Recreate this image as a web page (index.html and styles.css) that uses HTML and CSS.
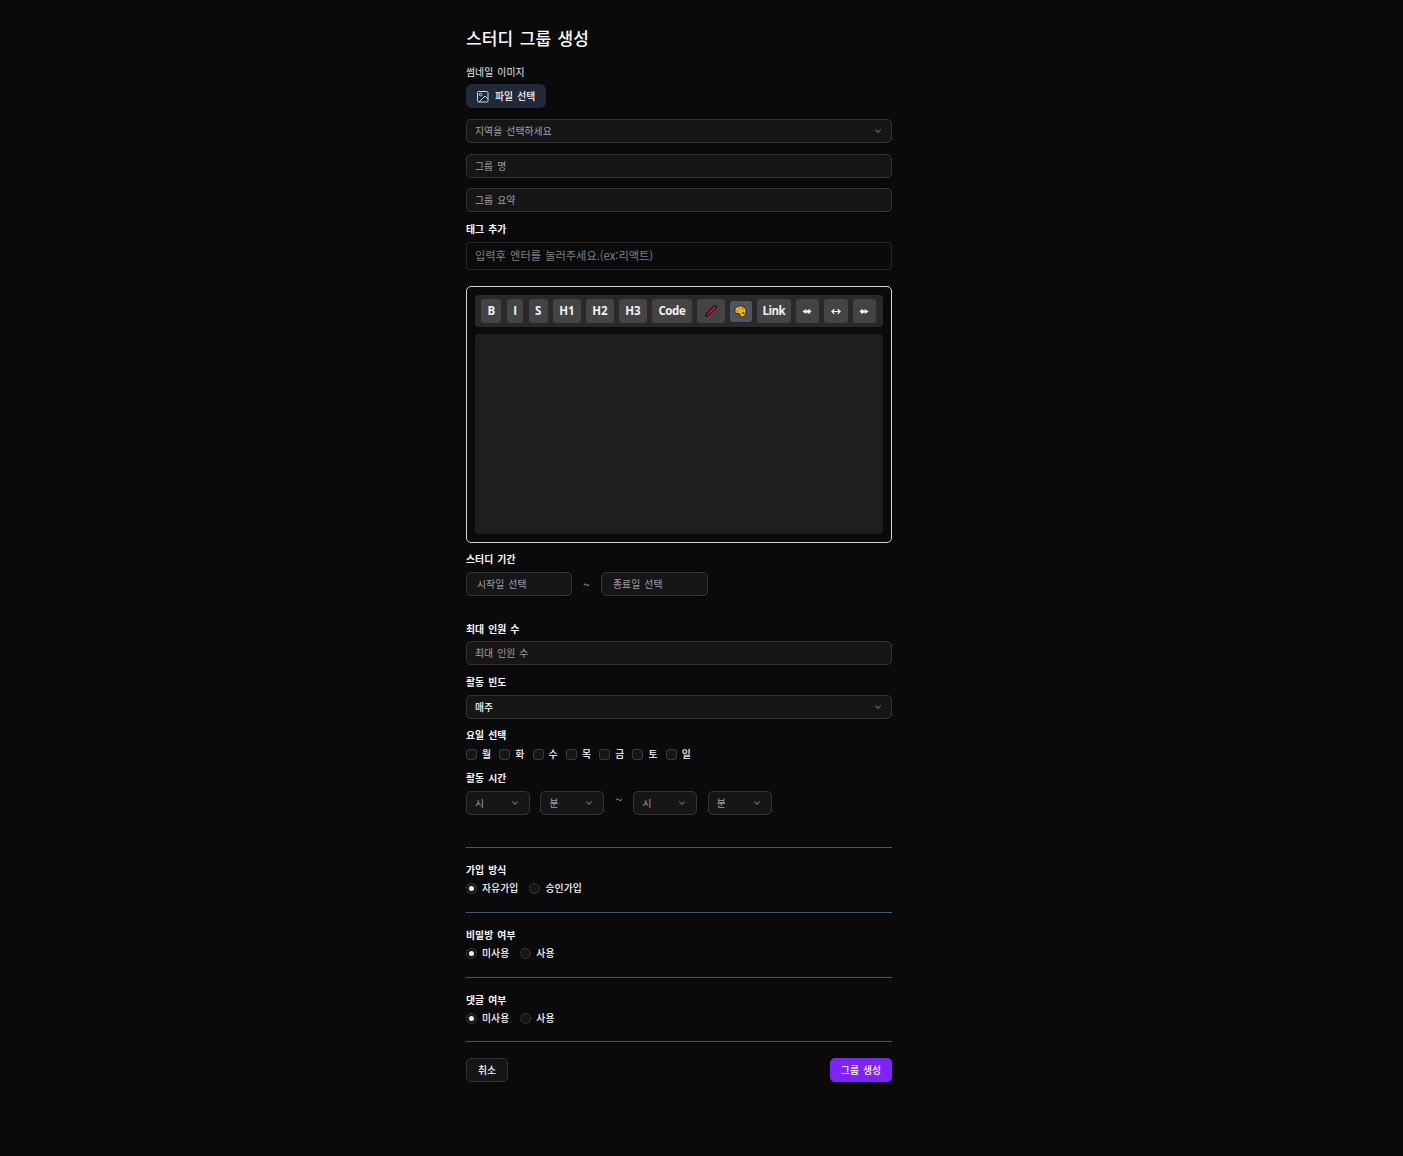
FILE: index.html
```html
<!DOCTYPE html>
<html lang="ko">
<head>
<meta charset="utf-8">
<title>스터디 그룹 생성</title>
<link rel="stylesheet" href="styles.css">
</head>
<body>
<svg class="defs" width="0" height="0" aria-hidden="true">
  <symbol id="chevron" viewBox="0 0 24 24"><path d="m6 9 6 6 6-6" fill="none" stroke="currentColor" stroke-width="2.6" stroke-linecap="round" stroke-linejoin="round"/></symbol>
</svg>
<main class="form">
  <h1 class="title">스터디 그룹 생성</h1>

  <div class="label thumb-label">썸네일 이미지</div>
  <button class="file-button">
    <svg width="13" height="13" viewBox="0 0 13 13" fill="none" stroke="currentColor" stroke-linejoin="round"><rect x="1.500" y="1.500" width="10.500" height="10.500" rx="1.200"/><circle cx="4.600" cy="4.600" r="1.300"/><path d="M3 12 9 6l3 3"/></svg>
    <span>파일 선택</span>
  </button>

  <div class="field select region"><span>지역을 선택하세요</span><svg class="chevron"><use href="#chevron"/></svg></div>
  <div class="field name"><span>그룹 명</span></div>
  <div class="field summary"><span>그룹 요약</span></div>

  <div class="label tag-label">태그 추가</div>
  <div class="tag-input"><span>입력후 엔터를 눌러주세요.(ex:리액트)</span></div>

  <section class="editor">
    <div class="toolbar">
      <button class="tool bold">B</button>
      <button class="tool italic">I</button>
      <button class="tool strike">S</button>
      <button class="tool heading">H1</button>
      <button class="tool heading">H2</button>
      <button class="tool heading">H3</button>
      <button class="tool code">Code</button>
      <button class="tool pen"><svg width="14" height="14" viewBox="0 0 14 14"><path d="M1.700 12.300 2.500 9.500 9.800 2.200Q11 1.200 12 2T11.800 4.200L4.500 11.500Z" fill="#e3064f" stroke="#16060b" stroke-width="1.100" stroke-linejoin="round"/></svg></button>
      <button class="tool palette"><svg width="13" height="13" viewBox="0 0 13 13"><path d="M6.500.8C3.200.8.8 2.800.8 5.500c0 2 1.500 3.200 3.200 3 1.400-.2 2.100.4 2 1.600-.1 1.400.8 2.200 2.200 1.900 2.300-.5 4-2.900 4-5.400C12.200 3.200 9.700.8 6.500.8Z" fill="#ffb900" stroke="#18130b" stroke-width=".9"/><circle cx="3.500" cy="5.700" r="1" fill="#e8590c"/><circle cx="5.300" cy="3" r="1" fill="#6a9d32"/><circle cx="8.600" cy="3.500" r="1" fill="#e03c31"/><circle cx="9.300" cy="8" r="1.300" fill="#245fd0"/></svg></button>
      <button class="tool link">Link</button>
      <button class="tool left"><svg width="10" height="8" viewBox="0 0 10 8"><path d="M.3 4.500 4.300 2v1.700L8 2v1.700h1.300v1.600H8V7L4.300 5.300V7Z" fill="currentColor"/></svg></button>
      <button class="tool both"><svg width="10" height="8" viewBox="0 0 10 8" fill="none" stroke="currentColor" stroke-width="1.200"><path d="M1 4.500h8M3.300 2.200.8 4.500l2.500 2.300M6.700 2.200 9.200 4.500 6.700 6.800"/></svg></button>
      <button class="tool right"><svg width="10" height="8" viewBox="0 0 10 8"><path d="M9.700 4.500 5.700 2v1.700L2 2v1.700H.7v1.600H2V7l3.700-1.700V7Z" fill="currentColor"/></svg></button>
    </div>
    <div class="canvas"></div>
  </section>

  <div class="label period-label">스터디 기간</div>
  <div class="dates">
    <div class="field date"><span>시작일 선택</span></div>
    <span class="tilde">~</span>
    <div class="field date end"><span>종료일 선택</span></div>
  </div>

  <div class="label max-label">최대 인원 수</div>
  <div class="field max"><span>최대 인원 수</span></div>

  <div class="label often-label">활동 빈도</div>
  <div class="field select often filled"><span>매주</span><svg class="chevron"><use href="#chevron"/></svg></div>

  <div class="label days-label">요일 선택</div>
  <div class="days">
    <label class="day"><i class="box"></i>월</label>
    <label class="day"><i class="box"></i>화</label>
    <label class="day"><i class="box"></i>수</label>
    <label class="day"><i class="box"></i>목</label>
    <label class="day"><i class="box"></i>금</label>
    <label class="day"><i class="box"></i>토</label>
    <label class="day"><i class="box"></i>일</label>
  </div>

  <div class="label time-label">활동 시간</div>
  <div class="times">
    <div class="field select time"><span>시</span><svg class="chevron"><use href="#chevron"/></svg></div>
    <div class="field select time"><span>분</span><svg class="chevron"><use href="#chevron"/></svg></div>
    <span class="tilde">~</span>
    <div class="field select time"><span>시</span><svg class="chevron"><use href="#chevron"/></svg></div>
    <div class="field select time"><span>분</span><svg class="chevron"><use href="#chevron"/></svg></div>
  </div>

  <section class="choice">
    <div class="label">가입 방식</div>
    <div class="radios">
      <label class="option"><i class="radio on"></i>자유가입</label>
      <label class="option"><i class="radio"></i>승인가입</label>
    </div>
  </section>
  <section class="choice">
    <div class="label">비밀방 여부</div>
    <div class="radios">
      <label class="option"><i class="radio on"></i>미사용</label>
      <label class="option"><i class="radio"></i>사용</label>
    </div>
  </section>
  <section class="choice last">
    <div class="label">댓글 여부</div>
    <div class="radios">
      <label class="option"><i class="radio on"></i>미사용</label>
      <label class="option"><i class="radio"></i>사용</label>
    </div>
  </section>

  <footer class="actions">
    <button class="cancel">취소</button>
    <button class="submit">그룹 생성</button>
  </footer>
</main>
</body>
</html>
```
FILE: styles.css
```css
* { box-sizing: border-box; }

body {
  margin: 0;
  min-height: 1156px;
  background: #0a0a0a;
  color: #fafafa;
  font-family: "Noto Sans CJK KR", sans-serif;
  font-size: 9.8px;
  line-height: 15px;
  letter-spacing: .1px;
  word-spacing: 1.1px;
}

button {
  border: 0;
  padding: 0;
  font: inherit;
  color: inherit;
  letter-spacing: inherit;
  word-spacing: inherit;
  white-space: nowrap;
}

.defs { display: block; }

.form {
  width: 426px;
  margin-left: 466px;
  padding-top: 24px;
}

.title {
  margin: 0;
  font-size: 17px;
  font-weight: 500;
  line-height: 28px;
  height: 30px;
  word-spacing: 1.6px;
}

.label { height: 15px; font-weight: 700; white-space: nowrap; }
.thumb-label { margin-top: 11px; height: 14px; line-height: 14px; font-weight: 400; color: #e5e5e5; }

.file-button {
  display: flex;
  align-items: center;
  gap: 6px;
  width: 80px;
  height: 24px;
  margin-top: 5px;
  padding-left: 10px;
  border-radius: 6px;
  background: #1e2939;
  font-weight: 500;
}
.file-button svg { color: #d1d5dc; flex: none; }

.field {
  display: flex;
  align-items: center;
  height: 24px;
  padding: 0 8px;
  border: 1px solid #343434;
  border-radius: 5px;
  background: #161616;
  color: #a1a1a1;
  white-space: nowrap;
}
.select { justify-content: space-between; }
.filled { color: #fafafa; font-weight: 500; }
.chevron { width: 10px; height: 10px; color: #606060; }
.region { margin-top: 11px; }
.name { margin-top: 11px; }
.summary { margin-top: 10px; }

.tag-label { margin-top: 10px; }
.tag-input {
  display: flex;
  align-items: center;
  height: 28px;
  margin-top: 5px;
  padding: 0 0 1px 8px;
  border: 1px solid #262626;
  border-radius: 3px;
  color: #808080;
  font-size: 11.2px;
  letter-spacing: 0;
}

.editor {
  height: 257px;
  margin-top: 16px;
  padding: 8px;
  border: 1px solid #d4d4d4;
  border-radius: 5px;
}
.toolbar {
  display: flex;
  align-items: center;
  gap: 5.33px;
  height: 32px;
  padding-left: 6px;
  border-radius: 4px;
  background: #292929;
}
.tool {
  display: flex;
  align-items: center;
  justify-content: center;
  flex: none;
  height: 24px;
  padding-bottom: 1px;
  border-radius: 3px;
  background: #444;
  color: #f2f2f2;
  font-family: "Open Sans", sans-serif;
  font-size: 11.5px;
  font-weight: 700;
  letter-spacing: -.2px;
}
.bold { width: 20.4px; }
.italic { width: 16.7px; }
.strike { width: 18.9px; }
.heading { width: 27.7px; }
.code { width: 39.8px; letter-spacing: -.4px; }
.pen { width: 27.7px; padding-bottom: 0; }
.palette { width: 21.4px; height: 21px; padding-bottom: 0; background: #4a5565; }
.link { width: 33.9px; letter-spacing: -.5px; }
.left { width: 22.6px; padding-bottom: 0; }
.both { width: 23.7px; padding-bottom: 0; }
.right { width: 22.8px; padding-bottom: 0; }
.canvas { height: 200px; margin-top: 7px; border-radius: 4px; background: #1e1e1e; }

.period-label { margin-top: 9px; }
.dates { display: flex; margin-top: 5px; }
.date { width: 106px; padding-left: 10px; }
.date.end { width: 107px; padding-left: 11px; }
.tilde { width: 29px; color: #a8b8cc; font-size: 11.5px; line-height: 24px; text-align: center; }

.max-label { margin-top: 26px; }
.max { margin-top: 4px; }
.often-label { margin-top: 10px; }
.often { margin-top: 5px; }

.days-label { margin-top: 9px; }
.days { display: flex; margin-top: 4px; }
.day, .option { display: flex; align-items: center; font-weight: 500; white-space: nowrap; }
.day { width: 33.3px; gap: 5px; }
.box { width: 11px; height: 11px; border: 1px solid #3a3a3a; border-radius: 3px; background: #161616; }

.time-label { margin-top: 9px; }
.times { display: flex; margin-top: 5px; }
.time { width: 64px; padding-right: 9px; }
.time + .time { margin-left: 10.4px; }
.times .tilde { line-height: 17px; }

.times + .choice { margin-top: 32px; }
.choice { height: 65px; padding-top: 15px; border-top: 1px solid #45556c; }
.choice.last { border-bottom: 1px solid #45556c; }
.radios { display: flex; gap: 11px; margin-top: 3px; }
.option { gap: 5px; }
.radio {
  display: grid;
  place-items: center;
  width: 11px;
  height: 11px;
  border: 1px solid #333;
  border-radius: 50%;
  background: #161616;
}
.radio.on::after { content: ""; width: 5px; height: 5px; border-radius: 50%; background: #f0f0f0; }

.actions { display: flex; justify-content: space-between; margin-top: 16px; }
.cancel, .submit { height: 24px; border-radius: 5px; font-weight: 500; }
.cancel { width: 42px; border: 1px solid #343434; background: #161616; }
.submit { width: 62px; background: #7f22fe; }
```
